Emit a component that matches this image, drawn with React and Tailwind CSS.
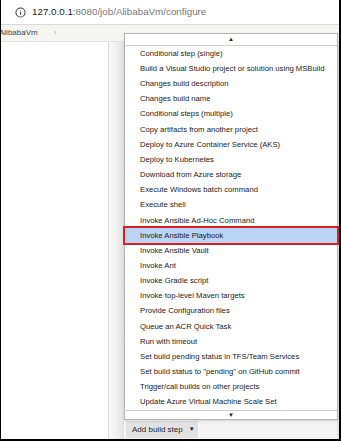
import { Info } from "lucide-react";

const steps = [
  "Conditional step (single)",
  "Build a Visual Studio project or solution using MSBuild",
  "Changes build description",
  "Changes build name",
  "Conditional steps (multiple)",
  "Copy artifacts from another project",
  "Deploy to Azure Container Service (AKS)",
  "Deploy to Kubernetes",
  "Download from Azure storage",
  "Execute Windows batch command",
  "Execute shell",
  "Invoke Ansible Ad-Hoc Command",
  "Invoke Ansible Playbook",
  "Invoke Ansible Vault",
  "Invoke Ant",
  "Invoke Gradle script",
  "Invoke top-level Maven targets",
  "Provide Configuration files",
  "Queue an ACR Quick Task",
  "Run with timeout",
  "Set build pending status in TFS/Team Services",
  'Set build status to "pending" on GitHub commit',
  "Trigger/call builds on other projects",
  "Update Azure Virtual Machine Scale Set",
];

const App = () => {
  return (
    <div
      className="relative flex h-[441px] w-[341px] flex-col overflow-hidden border-b-2 border-l border-r-2 border-black bg-white"
      style={{ fontFamily: '"Liberation Sans", Arial, sans-serif' }}
    >
      {/* address bar */}
      <div className="flex h-[25px] shrink-0 items-center gap-[6px] border-b border-[#d9d9d9] bg-white pl-[14px] text-[9.8px]">
        <Info size={11} strokeWidth={2.2} className="text-[#444]" />
        <span className="text-[#222]">
          127.0.0.1<span className="text-[#777]">:8080/job/AlibabaVm/configure</span>
        </span>
      </div>

      {/* breadcrumb */}
      <div className="flex h-[17px] shrink-0 items-center gap-[16px] border-b border-[#e2e4dc] bg-[#f5f6f1] text-[8px] text-[#444]">
        <span className="-ml-[2px]">AlibabaVm</span>
        <span className="text-[#aaa]">›</span>
      </div>

      {/* page */}
      <div className="flex flex-1">
        <div className="w-[107px] bg-white"></div>
        <div className="w-[16px] border-l border-[#dadada] bg-gradient-to-r from-[#f8f8f8] via-[#f1f1f1] to-[#e1e1e1]"></div>
        <div className="flex flex-1 flex-col justify-end border-r-2 border-[#e4e4e4] bg-[#f4f4f4] pb-[1px]">
          <div className="ml-[2px] flex h-[17px] w-[72px] items-center gap-[6px] bg-[#e2e2e2] pl-[6px] text-[8px] text-[#222]">
            <span>Add build step</span>
            <span className="text-[6px]">▼</span>
          </div>
        </div>
      </div>

      {/* dropdown menu */}
      <div className="absolute left-[123px] top-[33px] flex h-[387px] w-[214px] flex-col border border-[#b5b5b5] bg-white text-[7.7px] text-[#222] shadow-sm">
        <div className="flex h-[12px] shrink-0 items-center justify-center border-b border-[#d0d0d0] text-[6px]">▲</div>
        <ul className="flex flex-col">
          {steps.map((s) =>
            s === "Invoke Ansible Playbook" ? (
              <li key={s} className="relative flex h-[15.17px] items-center whitespace-nowrap bg-[#b9d4f7] pl-[15px]">
                {s}
                <span className="absolute -inset-x-[2px] -top-[2px] -bottom-[2px] border-2 border-[#e11b22]"></span>
              </li>
            ) : (
              <li key={s} className="flex h-[15.17px] items-center whitespace-nowrap pl-[15px]">
                {s}
              </li>
            )
          )}
        </ul>
        <div className="flex flex-1 items-center justify-center border-t border-[#d0d0d0] text-[6px]">▼</div>
      </div>
    </div>
  );
};

export default App;
